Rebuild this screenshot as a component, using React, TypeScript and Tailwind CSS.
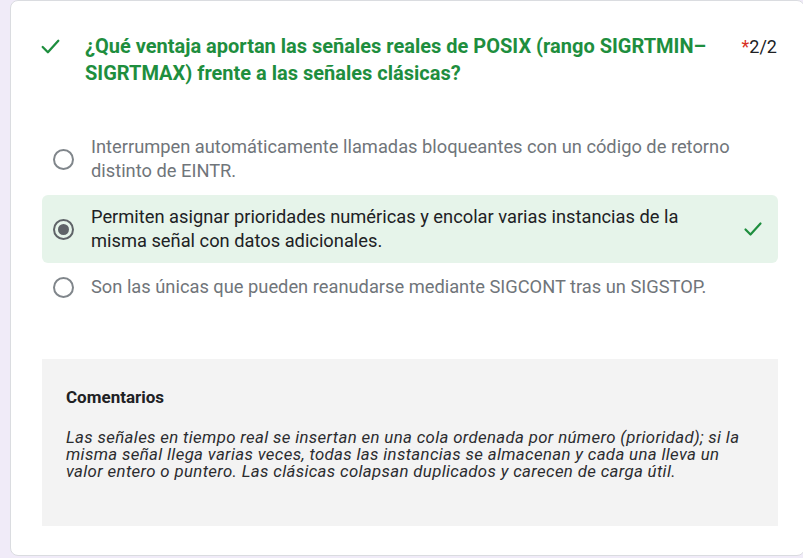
import React from "react";

const options = [
  {
    id: 1,
    lines: ["Interrumpen automáticamente llamadas bloqueantes con un código de retorno", "distinto de EINTR."],
    selected: false,
  },
  {
    id: 2,
    lines: ["Permiten asignar prioridades numéricas y encolar varias instancias de la", "misma señal con datos adicionales."],
    selected: true,
  },
  {
    id: 3,
    lines: ["Son las únicas que pueden reanudarse mediante SIGCONT tras un SIGSTOP."],
    selected: false,
  },
];

const comments = [
  "Las señales en tiempo real se insertan en una cola ordenada por número (prioridad); si la",
  "misma señal llega varias veces, todas las instancias se almacenan y cada una lleva un",
  "valor entero o puntero. Las clásicas colapsan duplicados y carecen de carga útil.",
];

const Check = ({ className }: { className?: string }) => (
  <svg viewBox="0 0 24 24" className={className} fill="none">
    <path
      d="M4.5 12.5l5 5L19.5 6.5"
      stroke="currentColor"
      strokeWidth="2.2"
      strokeLinecap="round"
      strokeLinejoin="round"
    />
  </svg>
);

const Radio = ({ selected }: { selected: boolean }) => (
  <div
    className={`w-[21px] h-[21px] shrink-0 rounded-full border-2 flex items-center justify-center ${
      selected ? "border-[#5f6368]" : "border-[#80868b]"
    }`}
  >
    {selected && <div className="w-[11px] h-[11px] rounded-full bg-[#5f6368]" />}
  </div>
);

const App = () => {
  return (
    <div
      className="w-[803px] h-[558px] overflow-hidden bg-[#f0ebf8]"
      style={{ fontFamily: "Roboto, 'Liberation Sans', sans-serif" }}
    >
      <div className="ml-[10px] w-[795px] h-[556px] bg-white rounded-lg border border-[#dadce0] pl-[27px] pr-[26px] pt-[32px]">
        <div className="flex items-start">
          <Check className="w-[25px] h-[25px] mt-[1px] text-[#1e8e3e] shrink-0" />
          <div className="ml-[22px] text-[20px] leading-[27px] font-bold text-[#1e8e3e]">
            ¿Qué ventaja aportan las señales reales de POSIX (rango SIGRTMIN–
            <br />
            SIGRTMAX) frente a las señales clásicas?
          </div>
          <div className="ml-auto mr-[1px] text-[18px] leading-[27px] text-[#202124]">
            <span className="text-[#d93025]">*</span>2/2
          </div>
        </div>

        <div className="ml-[4px] mt-[38px] flex flex-col gap-[2px]">
          {options.map((o) => (
            <div
              key={o.id}
              className={`flex items-center rounded-md pl-[11px] pr-[13px] py-[10px] ${
                o.selected ? "bg-[#e6f4ea]" : ""
              }`}
            >
              <Radio selected={o.selected} />
              <div
                className={`ml-[17px] text-[18.3px] leading-[24px] ${
                  o.selected ? "text-[#202124]" : "text-[#70757a]"
                }`}
              >
                {o.lines.map((l, i) => (
                  <div key={i}>{l}</div>
                ))}
              </div>
              {o.selected && <Check className="ml-auto w-[24px] h-[24px] text-[#1e8e3e]" />}
            </div>
          ))}
        </div>

        <div className="ml-[4px] mt-[50px] h-[167px] bg-[#f3f3f3] pl-[24px] pr-[12px] pt-[28px]">
          <div className="text-[17px] leading-[20px] font-bold text-[#202124]">Comentarios</div>
          <div className="mt-[22px] text-[16.8px] leading-[17px] tracking-[0.35px] italic text-[#2b2c2f] whitespace-nowrap">
            {comments.map((l, i) => (
              <div key={i}>{l}</div>
            ))}
          </div>
        </div>
      </div>
    </div>
  );
};

export default App;
